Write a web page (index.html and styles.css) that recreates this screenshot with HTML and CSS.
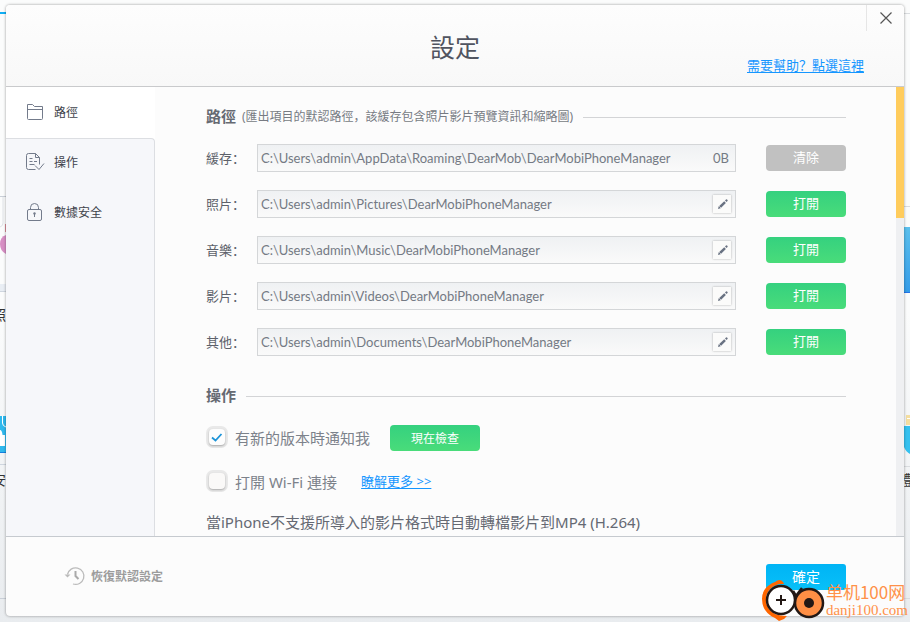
FILE: index.html
```
<!DOCTYPE html>
<html lang="zh-CN">
<head>
<meta charset="utf-8">
<meta name="viewport" content="width=device-width, initial-scale=1">
<title>設定</title>
<link rel="stylesheet" href="styles.css">
</head>
<body>
<svg class="symbols" aria-hidden="true">
  <symbol id="pencil" viewBox="0 0 18 18">
    <path d="M5 14l.700-2.600 5.500-5.200 1.700 1.700-5.300 5.400z" fill="#697282"/>
    <path d="M12 5.400l1-1q.500-.400 1 0l.500.500q.500.500 0 1l-1 1z" fill="#697282"/>
    <path d="M6.500 11.500l1.200 1.200" stroke="#f9f9f9"/>
  </symbol>
</svg>
<div class="backdrop backdrop-left" aria-hidden="true">
  <svg width="6" height="622" viewBox="0 0 6 622">
    <path d="M0 13h6" stroke="#10aff5" stroke-width="2"/>
    <path d="M0 196.500h6M0 598.500h6" stroke="#c9cfd7"/>
    <path d="M3 197v26q0 3-3 4" fill="none" stroke="#dfe2e6"/>
    <path d="M6 235q-6 2-6 9t6 10z" fill="#d78fc4"/>
    <path d="M5.500 224v8" stroke="#d98d98"/>
    <path d="M0 284h6v7H0z" fill="#e9eef4"/><path d="M0 291.500h6M0 464.500h6" stroke="#cfd6df"/>
    <path d="M0 416h6v37H0z" fill="#2fb9ee"/>
    <path d="M0 446v-16q2 0 2.500 5h2.500v11z" fill="#fff"/>
    <path d="M2.500 416v7q0 3 3.500 4" fill="none" stroke="#fff"/>
    <path d="M0 452.500h6" stroke="#1681e0"/>
  </svg>
  <span class="peek peek-photo">照</span>
  <span class="peek peek-install">安</span>
</div>
<div class="backdrop backdrop-right" aria-hidden="true">
  <svg width="6" height="622" viewBox="0 0 6 622">
    <defs><linearGradient id="blue" x2="0" y2="1"><stop stop-color="#5bc0ed"/><stop offset="1" stop-color="#349ce8"/></linearGradient></defs>
    <path d="M0 13.500h6M0 206.500h6M0 466.500h6M0 598.500h6" stroke="#d9dcdf"/>
    <path d="M0 227h6v65H0z" fill="url(#blue)"/><path d="M0 292.500h6" stroke="#2574e8"/>
    <path d="M2 415h4v10H2z" fill="#f4dea0"/><path d="M3 418.500h3" stroke="#fff"/>
    <path d="M0 426h6v28q-4-2-6-7z" fill="#35c1ef"/>
  </svg>
  <span class="peek peek-install">體</span>
</div>

<div class="dialog" role="dialog" aria-labelledby="title">
  <header class="header">
    <h1 id="title">設定</h1>
    <button class="close" type="button" aria-label="關閉">
      <svg width="12" height="12" viewBox="0 0 12 12"><path d="M.5.5l11 11M11.500.5l-11 11" stroke="#555" stroke-width="1.200"/></svg>
    </button>
    <a class="link help" href="#">需要幫助？點選這裡</a>
  </header>

  <div class="body">
    <nav class="sidebar">
      <a class="tab tab-active" href="#paths">
        <svg width="20" height="20" viewBox="0 0 20 20" fill="none" stroke="#737b8b"><path d="M2.500 16.500v-14h5l2 2h8v12q0 1-1 1h-13q-1 0-1-1zM2.500 7.500h15" stroke-linejoin="round"/></svg>
        路徑
      </a>
      <div class="tabs-rest">
        <a class="tab" href="#actions">
          <svg width="20" height="20" viewBox="0 0 20 20" fill="none" stroke="#737b8b"><path d="M10.500 17.500h-7q-2 0-2-2v-12q0-2 2-2h7l4 4v7M10.500 1.500v4h4M4.500 6.500h3M4.500 9.500h3M9 9.500h3M4.500 12.500h5M10 13.500l4 4 5-6"/></svg>
          操作
        </a>
        <a class="tab" href="#security">
          <svg width="20" height="20" viewBox="0 0 20 20" fill="none" stroke="#737b8b"><rect x="2.500" y="7.500" width="14" height="11" rx="1.500"/><path d="M5.500 7.500v-2q0-4 4-4t4 4v2"/><circle cx="9.500" cy="11.500" r="1.200" fill="#737b8b" stroke="none"/><path d="M9.500 12v3"/></svg>
          數據安全
        </a>
      </div>
    </nav>

    <main class="content">
      <section id="paths">
        <div class="section-head">
          <h2>路徑</h2>
          <span class="note">(匯出項目的默認路徑，該緩存包含照片影片預覽資訊和縮略圖)</span>
        </div>
        <div class="rows">
          <div class="row">
            <label for="cache">緩存：</label>
            <div class="field"><input id="cache" type="text" readonly value="C:\Users\admin\AppData\Roaming\DearMob\DearMobiPhoneManager"><span class="size">0B</span></div>
            <button class="btn btn-gray" type="button">清除</button>
          </div>
          <div class="row">
            <label for="photos">照片：</label>
            <div class="field"><input id="photos" type="text" readonly value="C:\Users\admin\Pictures\DearMobiPhoneManager"><button class="edit" type="button" aria-label="編輯照片路徑"><svg width="18" height="18"><use href="#pencil"/></svg></button></div>
            <button class="btn" type="button">打開</button>
          </div>
          <div class="row">
            <label for="music">音樂：</label>
            <div class="field"><input id="music" type="text" readonly value="C:\Users\admin\Music\DearMobiPhoneManager"><button class="edit" type="button" aria-label="編輯音樂路徑"><svg width="18" height="18"><use href="#pencil"/></svg></button></div>
            <button class="btn" type="button">打開</button>
          </div>
          <div class="row">
            <label for="videos">影片：</label>
            <div class="field"><input id="videos" type="text" readonly value="C:\Users\admin\Videos\DearMobiPhoneManager"><button class="edit" type="button" aria-label="編輯影片路徑"><svg width="18" height="18"><use href="#pencil"/></svg></button></div>
            <button class="btn" type="button">打開</button>
          </div>
          <div class="row">
            <label for="others">其他：</label>
            <div class="field"><input id="others" type="text" readonly value="C:\Users\admin\Documents\DearMobiPhoneManager"><button class="edit" type="button" aria-label="編輯其他路徑"><svg width="18" height="18"><use href="#pencil"/></svg></button></div>
            <button class="btn" type="button">打開</button>
          </div>
        </div>
      </section>

      <section id="actions" class="actions">
        <div class="section-head"><h2>操作</h2></div>
        <div class="option">
          <input id="notify" type="checkbox" checked>
          <label for="notify">有新的版本時通知我</label>
          <button class="btn btn-check" type="button">現在檢查</button>
        </div>
        <div class="option">
          <input id="wifi" type="checkbox">
          <label for="wifi">打開 Wi-Fi 連接</label>
          <a class="link" href="#">瞭解更多 &gt;&gt;</a>
        </div>
        <p class="convert">當iPhone不支援所導入的影片格式時自動轉檔影片到MP4 (H.264)</p>
      </section>
    </main>
    <div class="scrollbar"><div class="thumb"></div></div>
  </div>

  <footer class="footer">
    <button class="restore" type="button">
      <svg width="22" height="20" viewBox="0 0 22 20" fill="none" stroke="#bbb" stroke-width="1.300"><path d="M3.500 8.500a8.300 8.300 0 1 1 5.500 9.500"/><path d="M.5 8.500h6l-3 3z" fill="#bbb" stroke="none"/><path d="M11.500 5v5l3 3" stroke="#aaa" stroke-width="2"/></svg>
      恢復默認設定
    </button>
    <button class="ok" type="button">確定</button>
  </footer>
</div>

<div class="watermark">
  <svg width="64" height="44" viewBox="0 0 64 44">
    <path d="M14 4q5-4 8 0l1 2h-5Q5 10 5 22q0 9 9 14 5 2 12 2l-3 3-5 2-4-3Q1 34 1 21 1 9 14 4z" fill="#f60"/>
    <circle cx="20" cy="22" r="14" fill="#fff" stroke="#231815" stroke-width="2.500"/>
    <path d="M15 22h10M20 17v10" stroke="#231815" stroke-width="2"/>
    <path d="M32 13l3 5 6-8" fill="none" stroke="#231815" stroke-width="2.500"/>
    <circle cx="48" cy="25" r="14" fill="#ff8f45" stroke="#231815" stroke-width="2.500"/>
    <circle cx="48" cy="25" r="5" fill="#231815"/>
  </svg>
  <div class="brand"><span>单机100网</span><span class="domain">danji100.com</span></div>
</div>
</body>
</html>
```

FILE: styles.css
```
* { box-sizing: border-box; }

body {
  margin: 0;
  height: 100vh;
  padding: 5px 6px 6px;
  position: relative;
  overflow: hidden;
  background: linear-gradient(#fbfcfc, #fbfcfc 50%, #e9ecef);
  font-family: "Noto Sans", "Noto Sans CJK SC", sans-serif;
  font-size: 13px;
  color: #5d616a;
}

button { font-family: inherit; cursor: pointer; }
h1, h2, p { margin: 0; }
.symbols { position: absolute; width: 0; height: 0; }

/* Slivers of the main window that show beside the dialog */
.backdrop { position: absolute; top: 0; bottom: 0; width: 6px; overflow: hidden; }
.backdrop-left { left: 0; }
.backdrop-right { right: 0; }
.peek { position: absolute; right: 0; font-size: 14px; line-height: 20px; color: #333; }
.peek-photo { top: 305px; }
.peek-install { top: 470px; }
.backdrop-right .peek { right: auto; left: -6px; }

.dialog {
  position: relative;
  height: 100%;
  display: flex;
  flex-direction: column;
  background: #fcfcfc;
  border-radius: 4px;
  box-shadow: 0 0 3px rgba(0, 0, 0, .4);
  overflow: hidden;
}

.header {
  position: relative;
  flex: none;
  height: 82px;
  border-bottom: 1px solid #c9cacc;
  background: linear-gradient(#fdfdfd, #f8f8f8);
  text-align: center;
}
h1 { padding-top: 24px; font-size: 25px; line-height: 36px; font-weight: 400; color: #505460; }
.close {
  position: absolute;
  top: 0;
  right: 0;
  width: 38px;
  height: 26px;
  padding: 0;
  border: 0;
  border-left: 1px solid #e6e6e6;
  background: none;
}
.close svg { display: block; margin: 0 auto; }
.link { color: #1596ff; text-decoration: underline; text-underline-offset: 2px; }
.help { position: absolute; right: 40px; bottom: 11px; line-height: 20px; }

.body { flex: 1; min-height: 0; display: flex; }
.sidebar { flex: none; width: 149px; display: flex; flex-direction: column; background: #fff; }
.tab {
  display: flex;
  align-items: center;
  gap: 9px;
  height: 50px;
  padding-left: 19px;
  font-size: 12px;
  color: #40434b;
  text-decoration: none;
}
.tab svg { flex: none; }
.tabs-rest {
  flex: 1;
  margin-top: 1px;
  background: #f6f7fa;
  border: 1px solid #dcdee2;
  border-width: 1px 1px 0 0;
  border-top-right-radius: 4px;
}
.tabs-rest .tab { padding-bottom: 4px; }

.content { flex: 1; min-width: 0; padding: 20px 50px 0 51px; overflow: hidden; }
.scrollbar { flex: none; width: 8px; background: #eff0f2; }
.thumb { height: 131px; background: #ffcc5c; }

.section-head { display: flex; align-items: center; gap: 6px; height: 20px; line-height: 20px; }
.section-head::after { content: ""; flex: 1; height: 1px; margin-left: 4px; background: #d3d4d6; }
h2 { padding-bottom: 2px; font-size: 15px; line-height: 20px; font-weight: 700; color: #666a72; }
.note { font-size: 12px; color: #777b83; white-space: nowrap; }

.rows { display: grid; gap: 18px; margin-top: 17px; }
.row { display: grid; grid-template-columns: 51px 1fr 80px; align-items: center; }
.row label { padding-bottom: 2px; white-space: nowrap; }
.field {
  display: flex;
  align-items: center;
  height: 28px;
  margin-right: 30px;
  padding: 0 4px 0 3px;
  border: 1px solid #d4d6d8;
  background: linear-gradient(#eff1f3, #fafafa);
}
.field input {
  flex: 1;
  min-width: 0;
  padding: 0;
  border: 0;
  outline: 0;
  background: none;
}
.field input, .size { font-family: Lato, sans-serif; font-size: 13px; line-height: 20px; color: #747a84; }
.size { padding-right: 2px; }
.edit {
  width: 18px;
  height: 18px;
  padding: 0;
  border: 0;
  background: #fbfbfa;
  box-shadow: 0 0 2px rgba(0, 0, 0, .3);
}
.edit svg { display: block; }
.btn {
  height: 26px;
  padding: 0 0 4px;
  border: 0;
  border-radius: 4px;
  background: linear-gradient(#35d17f, #49dc7a);
  color: #fff;
  font-size: 13px;
}
.btn-gray { background: #c1c1c1; }

.actions { margin-top: 30px; }
.option { display: flex; align-items: center; height: 44px; font-size: 15px; color: #7c828b; }
.option label { padding-bottom: 2px; }
.actions .section-head + .option { margin-top: 10px; }
.option input {
  appearance: none;
  flex: none;
  width: 16px;
  height: 16px;
  margin: 0 10px 2px 3px;
  border-radius: 4px;
  background: #faf9f8;
  box-shadow: 0 1px 2px #aaa, 0 0 0 3px #e9e9e9;
}
.option input:checked {
  background: #fdfdfd url("data:image/svg+xml,%3Csvg xmlns='http://www.w3.org/2000/svg' viewBox='0 0 16 16'%3E%3Cpath d='M3 8.500l3.500 3 6-6.500' fill='none' stroke='%231d94d8' stroke-width='1.800'/%3E%3C/svg%3E") center / 16px no-repeat;
}
.btn-check { width: 90px; margin-left: 20px; padding: 0; font-size: 12px; }
.option .link { margin-left: 24px; padding-bottom: 4px; font-size: 13px; }
.convert { margin-top: 6px; font-size: 15px; line-height: 24px; white-space: nowrap; color: #656973; }

.footer {
  flex: none;
  display: flex;
  justify-content: space-between;
  align-items: center;
  height: 80px;
  padding: 0 58px;
  border-top: 1px solid #c6cacf;
}
.restore {
  display: flex;
  align-items: center;
  gap: 5px;
  padding: 0 0 2px;
  border: 0;
  background: none;
  color: #9c9c9c;
  font-size: 12px;
  font-weight: 700;
}
.ok {
  width: 80px;
  height: 26px;
  padding: 0 0 2px;
  border: 0;
  border-radius: 3px;
  background: linear-gradient(#00b4f5, #08c0f8);
  color: #fff;
  font-size: 14px;
}

/* Site mark laid over the corner of the window */
.watermark { position: absolute; right: 2px; bottom: 0; display: flex; align-items: center; gap: 1px; color: #ff9149; }
.brand { display: flex; flex-direction: column; font-family: "Noto Sans CJK SC", sans-serif; font-size: 17px; line-height: 20px; }
.domain { font-family: "Liberation Serif", serif; font-size: 15px; line-height: 16px; }
```
